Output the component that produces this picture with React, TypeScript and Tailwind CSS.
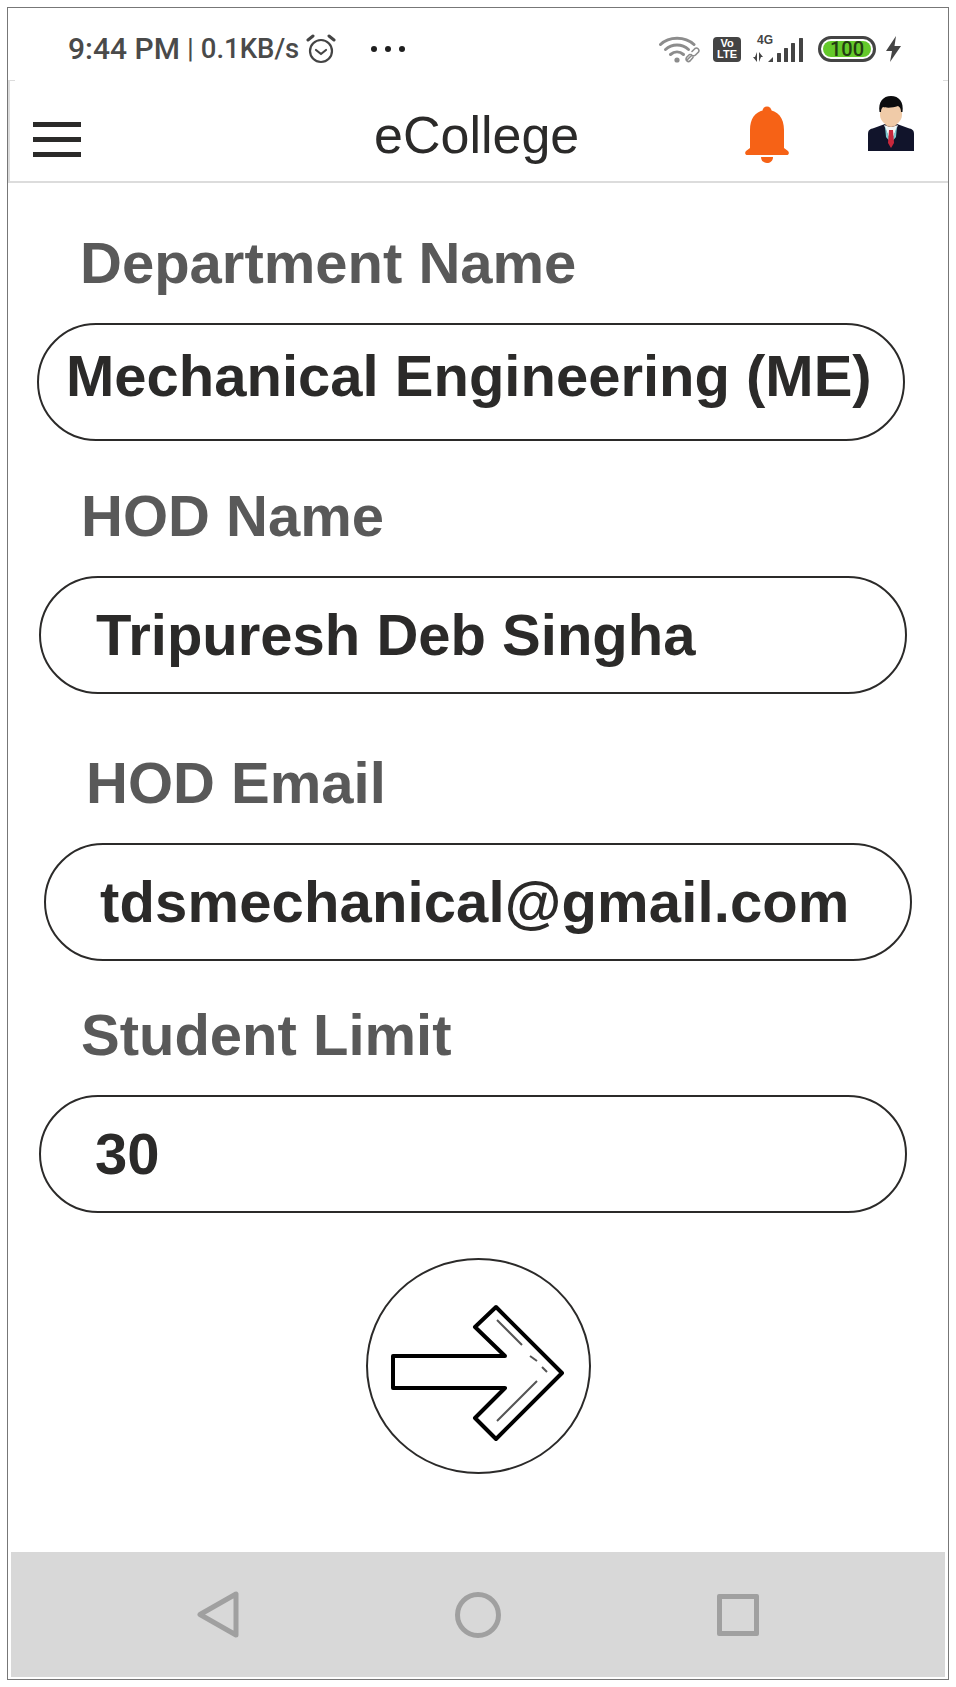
import React from 'react';

const fields = [
    {
        label: 'Department Name',
        value: 'Mechanical Engineering (ME)',
        labelClass: 'ml-[72px] mt-[47px]',
        pillClass: 'ml-[29px] mt-[27px] w-[868px] pl-[27px] pb-[12px]'
    },
    {
        label: 'HOD Name',
        value: 'Tripuresh Deb Singha',
        labelClass: 'ml-[73px] mt-[42px]',
        pillClass: 'ml-[31px] mt-[27px] w-[868px] pl-[55px]'
    },
    {
        label: 'HOD Email',
        value: 'tdsmechanical@gmail.com',
        labelClass: 'ml-[78px] mt-[56px]',
        pillClass: 'ml-[36px] mt-[27px] w-[868px] pl-[54px] tracking-[0.14px]'
    },
    {
        label: 'Student Limit',
        value: '30',
        labelClass: 'ml-[73px] mt-[41px]',
        pillClass: 'ml-[31px] mt-[27px] w-[868px] pl-[54px]'
    }
];

const WifiIcon = () => (
    <svg width="42" height="27" viewBox="0 0 42 27" fill="none" stroke="#8c8c8c" strokeLinecap="round">
        <path d="M1.5 8.5C10 0 26 0 35 8.5" strokeWidth="3" />
        <path d="M6.5 13.5C13 7.5 23 7.5 29.5 13.5" strokeWidth="3" />
        <path d="M11.5 18.5C15.5 15 20.5 15 24.5 18.5" strokeWidth="3" />
        <circle cx="18" cy="24" r="2.6" fill="#8c8c8c" stroke="none" />
        <path d="M28 24L32 20M33 15.5L36 12.5C38 11 41 13.5 39.5 16L36.5 19C35 20.5 33 20 32 18.5M34 21.5L31 25C29 26.5 26 24.5 27.5 21.5L30.5 18.5" strokeWidth="1.6" />
    </svg>
);

const SignalIcon = () => (
    <div className="relative w-[51px] h-[27px]">
        <span className="absolute left-[4px] -top-[2px] text-[12px] leading-[12px] font-bold text-[#444]">4G</span>
        <svg className="absolute left-0 top-0" width="51" height="27" viewBox="0 0 51 27" fill="#444">
            <path d="M4 16V26L0 21H2ZM6 26V16L10 21H8Z" />
            <path d="M15 26L20 21V26Z" />
            <rect x="24" y="17" width="4" height="9" rx="0.5" />
            <rect x="31" y="12" width="4" height="14" rx="0.5" />
            <rect x="38" y="7" width="4" height="19" rx="0.5" />
            <rect x="46" y="2" width="4" height="24" rx="0.5" />
        </svg>
    </div>
);

const BellIcon = () => (
    <svg width="44" height="57" viewBox="0 0 44 57" fill="#f66216">
        <circle cx="22" cy="5" r="4.5" />
        <path d="M22 4C11 4 5 12 5 24V42L1 45C-0.5 46.5 0 49 2.5 49H41.5C44 49 44.5 46.5 43 45L39 42V24C39 12 33 4 22 4Z" />
        <path d="M16 51H28C28 59 16 59 16 51Z" />
    </svg>
);

const AvatarIcon = () => (
    <svg width="46" height="55" viewBox="0 0 46 55">
        <path d="M0 55V38C0 34 2 33 6 32L17 28H29L40 32C44 33 46 34 46 38V55Z" fill="#11142b" />
        <path d="M16 29L23 47L30 29L24 31H22Z" fill="#f4f7f7" />
        <path d="M17 30L23 47L18 41Z" fill="#7ecbd2" />
        <path d="M29 30L23 47L28 41Z" fill="#7ecbd2" />
        <path d="M21 34H25L26 47L23 52L20 47Z" fill="#c8283c" />
        <path d="M17 22H29V28C27 32 19 32 17 28Z" fill="#e4b998" />
        <path d="M12 10H34V19C34 25 28 30 23 30C18 30 12 25 12 19Z" fill="#f0cba8" />
        <path d="M11.5 16C10 6 15 0 23 0C31 0 36 6 34.5 16L33 16C33 13 32 11 30 10C25 12 18 12 15 11C13.5 12 13 14 13 16Z" fill="#0c0c0e" />
    </svg>
);

const ArrowIcon = () => (
    <svg width="219" height="211" viewBox="2 2 219 211" fill="none" stroke="#000">
        <path d="M26 97H138L108 68L129 48L195 114L129 180L108 159L138 129H26Z" strokeWidth="4" strokeLinejoin="round" />
        <path d="M130 61L155 86M163 97L170 102M175 108L180 113M170 122L130 162" stroke="#555" strokeWidth="2" />
    </svg>
);

export default function App() {
    return (
        <div className="w-[956px] h-[1687px] bg-white p-[7px] font-['Liberation_Sans',sans-serif]">
            <div className="flex flex-col h-full border border-[#777]">
                {/* status bar */}
                <div className="flex items-center h-[72px] shrink-0 pl-[60px] pr-[46px] pt-[10px]">
                    <span className="font-['Roboto',sans-serif] font-medium text-[30px] text-[#4a4a4a] leading-none">9:44 PM</span>
                    <span className="font-['Roboto',sans-serif] text-[28px] text-[#4a4a4a] leading-none ml-[7px]">|</span>
                    <span className="font-['Roboto',sans-serif] font-medium text-[27.5px] text-[#4a4a4a] leading-none ml-[7px]">0.1KB/s</span>
                    <svg className="ml-[7px]" width="30" height="30" viewBox="0 0 30 30" fill="none" stroke="#444" strokeWidth="2.2" strokeLinecap="round" strokeLinejoin="round">
                        <circle cx="15" cy="17" r="11" />
                        <path d="M10 16L15 20L20 16" />
                        <path d="M2 6L7 2M28 6L23 2" strokeWidth="3" />
                    </svg>
                    <div className="flex gap-[8px] ml-[35px]">
                        <span className="w-[6px] h-[6px] rounded-full bg-[#1f1f1f]" />
                        <span className="w-[6px] h-[6px] rounded-full bg-[#1f1f1f]" />
                        <span className="w-[6px] h-[6px] rounded-full bg-[#1f1f1f]" />
                    </div>
                    <div className="flex items-center ml-auto">
                        <WifiIcon />
                        <div className="flex flex-col items-center justify-center w-[28px] h-[25px] ml-[12px] rounded-[4px] bg-[#444] text-white text-[11px] leading-[11px] font-bold">
                            <span>Vo</span>
                            <span>LTE</span>
                        </div>
                        <div className="ml-[12px]">
                            <SignalIcon />
                        </div>
                        <div className="flex items-center justify-center w-[58px] h-[26px] ml-[14px] rounded-full border-[3px] border-[#444] p-[2px]">
                            <div className="flex items-center justify-center w-full h-full rounded-full bg-[#65c92b] text-[#233c12] text-[20px] leading-none font-medium font-['Roboto',sans-serif]">100</div>
                        </div>
                        <svg className="ml-[9px]" width="17" height="26" viewBox="0 0 17 26" fill="#444">
                            <path d="M11 0L1 15H7L5 26L16 10H9.5Z" />
                        </svg>
                    </div>
                </div>

                {/* top nav */}
                <div className="relative flex items-center h-[103px] shrink-0 bg-white border-l-2 border-b-2 border-[#dcdcdc]">
                    <span className="absolute -left-[2px] top-0 w-[7px] h-[1px] bg-[#dcdcdc]" />
                    <span className="absolute right-0 top-0 w-[5px] h-[1px] bg-[#dcdcdc]" />
                    <div className="flex flex-col gap-[10px] ml-[23px] mt-[18px]">
                        <span className="block w-[48px] h-[5px] bg-[#2b2a29]" />
                        <span className="block w-[48px] h-[5px] bg-[#2b2a29]" />
                        <span className="block w-[48px] h-[5px] bg-[#2b2a29]" />
                    </div>
                    <h1 className="ml-[293px] mt-[8px] text-[52px] leading-none font-normal text-[#2b2a29]">eCollege</h1>
                    <div className="ml-[166px] mt-[7px]">
                        <BellIcon />
                    </div>
                    <div className="ml-[79px] -mt-[14px]">
                        <AvatarIcon />
                    </div>
                </div>

                {/* form */}
                <div className="flex-1">
                    {fields.map(field => (
                        <div key={field.label}>
                            <div className={`text-[58px] leading-[66px] font-bold text-[#595959] ${field.labelClass}`}>
                                {field.label}
                            </div>
                            <div className={`flex items-center h-[118px] rounded-full border-2 border-[#2b2a29] text-[58px] leading-none font-bold text-[#2b2a29] ${field.pillClass}`}>
                                {field.value}
                            </div>
                        </div>
                    ))}
                    <button className="flex items-center justify-center w-[225px] h-[216px] ml-[358px] mt-[45px] rounded-[50%] border-2 border-[#2b2a29]">
                        <ArrowIcon />
                    </button>
                </div>

                {/* android nav */}
                <div className="flex items-center h-[125px] shrink-0 mx-[3px] mb-[2px] bg-[#d8d8d8]">
                    <svg className="ml-[186px]" width="44" height="47" viewBox="0 0 44 47" fill="none" stroke="#a0a0a0" strokeWidth="5" strokeLinejoin="round">
                        <path d="M39 3V44L3 23.5Z" />
                    </svg>
                    <div className="w-[46px] h-[46px] ml-[214px] rounded-full border-[5px] border-[#a0a0a0]" />
                    <div className="w-[42px] h-[42px] ml-[216px] rounded-[2px] border-[5px] border-[#a0a0a0]" />
                </div>
            </div>
        </div>
    );
}
